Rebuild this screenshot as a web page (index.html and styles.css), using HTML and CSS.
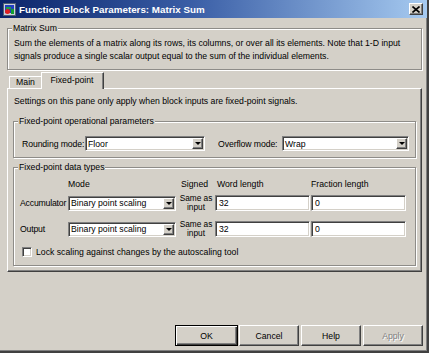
FILE: index.html
```html
<!DOCTYPE html>
<html>
<head>
<meta charset="utf-8">
<link rel="stylesheet" href="styles.css">
</head>
<body>
<div class="window">
  <div class="titlebar">
    <svg class="app-icon" width="13" height="13" viewBox="0 0 13 13">
      <rect x="0.5" y="0.5" width="12" height="12" fill="#c8d0e0" stroke="#506070"/>
      <rect x="2" y="2" width="9" height="8" fill="#2040c0"/>
      <rect x="3" y="4" width="5" height="2" fill="#20a040"/>
      <circle cx="4.5" cy="8.5" r="2.5" fill="#e02020"/>
      <rect x="8" y="6" width="3" height="5" fill="#10a030"/>
    </svg>
    <span class="title">Function Block Parameters: Matrix Sum</span>
    <span class="close-btn">
      <svg width="8" height="7" viewBox="0 0 8 7"><path d="M0.5 0.5 L7.5 6.5 M7.5 0.5 L0.5 6.5" stroke="#000" stroke-width="1.6"/></svg>
    </span>
  </div>
  <div class="client">
    <div class="group desc-group">
      <div class="group-title">Matrix Sum</div>
      <p class="desc">Sum the elements of a matrix along its rows, its columns, or over all its elements. Note that 1-D input<br>signals produce a single scalar output equal to the sum of the individual elements.</p>
    </div>
    <div class="tabs">
      <div class="tab">Main</div>
      <div class="tab active">Fixed-point</div>
    </div>
    <div class="pane">
      <p class="note">Settings on this pane only apply when block inputs are fixed-point signals.</p>
      <div class="group inner-group ops">
        <div class="group-title">Fixed-point operational parameters</div>
        <div class="ops-row">
          <span class="lbl">Rounding mode:</span>
          <div class="combo"><span>Floor</span><span class="drop"><i class="tri"></i></span></div>
          <span class="lbl">Overflow mode:</span>
          <div class="combo"><span>Wrap</span><span class="drop"><i class="tri"></i></span></div>
        </div>
      </div>
      <div class="group inner-group types">
        <div class="group-title">Fixed-point data types</div>
        <div class="types-grid">
          <span></span>
          <span class="hdr hdr-mode">Mode</span>
          <span class="hdr hdr-signed">Signed</span>
          <span class="hdr">Word length</span>
          <span class="hdr">Fraction length</span>

          <span class="row-lbl">Accumulator</span>
          <div class="combo"><span>Binary point scaling</span><span class="drop"><i class="tri"></i></span></div>
          <span class="signed">Same as<br>input</span>
          <div class="field">32</div>
          <div class="field">0</div>

          <span class="row-lbl">Output</span>
          <div class="combo"><span>Binary point scaling</span><span class="drop"><i class="tri"></i></span></div>
          <span class="signed">Same as<br>input</span>
          <div class="field">32</div>
          <div class="field">0</div>
        </div>
        <div class="check-row">
          <span class="checkbox"></span>
          <span>Lock scaling against changes by the autoscaling tool</span>
        </div>
      </div>
    </div>
    <div class="buttons">
      <button class="btn btn-default">OK</button>
      <button class="btn">Cancel</button>
      <button class="btn btn-help">Help</button>
      <button class="btn btn-disabled">Apply</button>
    </div>
  </div>
</div>
</body>
</html>
```

FILE: styles.css
```css
* { box-sizing: border-box; }
html, body { margin: 0; padding: 0; }
body {
  width: 429px;
  height: 353px;
  overflow: hidden;
  background: #d4d0c8;
  font-family: "Liberation Sans", Arial, sans-serif;
  font-size: 8.7px;
  color: #000;
}
.window {
  width: 429px;
  height: 353px;
  border-right: 2px solid #404040;
  border-bottom: 2px solid #404040;
  box-shadow: inset -1px -1px 0 #808080;
  display: flex;
  flex-direction: column;
}
.titlebar {
  height: 18px;
  flex: none;
  display: flex;
  align-items: center;
  padding: 0 3px 0 3px;
  background: linear-gradient(to right, #0a246a 0%, #3a5ea6 45%, #a6caf0 100%);
}
.app-icon { flex: none; margin-right: 3px; }
.title {
  color: #fff;
  font-weight: bold;
  font-size: 9.8px;
  white-space: nowrap;
  flex: 1;
}
.close-btn {
  width: 14px;
  height: 12px;
  background: #d4d0c8;
  border: 1px solid;
  border-color: #fff #404040 #404040 #fff;
  box-shadow: inset -1px -1px 0 #808080;
  display: flex;
  align-items: center;
  justify-content: center;
  margin-right: 1px;
}
.client {
  flex: 1;
  display: flex;
  flex-direction: column;
  padding-left: 7px;
}
.group {
  border: 1px solid #8e8c88;
  box-shadow: inset 1px 1px 0 #fff, 1px 1px 0 #fff;
}
.group-title {
  width: fit-content;
  margin-top: -7px;
  margin-left: 4px;
  padding: 0 1px;
  line-height: 12px;
  background: #d4d0c8;
  white-space: nowrap;
}
.desc-group {
  width: 415px;
  margin-top: 10px;
  padding-bottom: 6px;
}
.desc {
  margin: 3px 0 0 6px;
  line-height: 13px;
  white-space: nowrap;
}
.tabs {
  display: flex;
  align-items: flex-end;
  height: 16px;
  margin-top: 2px;
  padding-left: 2px;
  position: relative;
  z-index: 1;
}
.tab {
  height: 12px;
  line-height: 11px;
  padding: 0 6px 0 5px;
  border: 1px solid;
  border-bottom: none;
  border-color: #fff #404040 transparent #fff;
  box-shadow: inset -1px 0 0 #808080;
  width: 34px;
  text-align: center;
}
.tab.active {
  height: 17px;
  width: 63px;
  line-height: 14px;
  margin-left: -2px;
  margin-bottom: -1px;
  background: #d4d0c8;
}
.pane {
  width: 415px;
  height: 184px;
  border: 1px solid;
  border-color: #fff #404040 #404040 #fff;
  box-shadow: inset -1px -1px 0 #808080;
  padding: 6px 0 0 5px;
}
.note {
  margin: 0 0 0 1px;
  line-height: 12px;
  white-space: nowrap;
}
.inner-group { width: 403px; }
.ops { margin-top: 14px; padding-bottom: 6px; }
.ops-row {
  display: grid;
  grid-template-columns: 63px 120px 13px 64px 127px;
  align-items: center;
  height: 15px;
  margin-top: 9px;
  padding-left: 8px;
}
.ops-row .lbl:nth-of-type(2) { grid-column: 4; }
.lbl { white-space: nowrap; letter-spacing: -0.1px; }
.combo {
  height: 15px;
  background: #fff;
  border: 1px solid;
  border-color: #808080 #fff #fff #808080;
  box-shadow: inset 1px 1px 0 #404040, inset -1px -1px 0 #d4d0c8;
  display: flex;
  align-items: center;
  padding-left: 2px;
  white-space: nowrap;
}
.combo > span:first-child { flex: 1; }
.drop {
  width: 11px;
  height: 11px;
  margin-right: 1px;
  background: #d4d0c8;
  border: 1px solid;
  border-color: #fff #404040 #404040 #fff;
  box-shadow: inset -1px -1px 0 #808080;
  display: flex;
  align-items: center;
  justify-content: center;
}
.tri {
  width: 0;
  height: 0;
  border-left: 3px solid transparent;
  border-right: 3px solid transparent;
  border-top: 3px solid #000;
}
.types { margin-top: 9px; padding-bottom: 7px; }
.types-grid {
  display: grid;
  grid-template-columns: 48px 109px 38px 96px 95px;
  row-gap: 8px;
  align-items: center;
  margin-top: 5px;
  padding-left: 6px;
}
.types-grid .combo { width: 108px; }
.types-grid .field { width: 95px; }
.types-grid .hdr { line-height: 12px; white-space: nowrap; margin-bottom: -4px; }
.types-grid .hdr-signed { padding-left: 4px; }
.types-grid .hdr:nth-child(4) { padding-left: 2px; }
.row-lbl { white-space: nowrap; letter-spacing: -0.2px; }
.signed {
  text-align: center;
  line-height: 9px;
  font-size: 8.3px;
}
.field {
  height: 16px;
  background: #fff;
  border: 1px solid;
  border-color: #808080 #fff #fff #808080;
  box-shadow: inset 1px 1px 0 #404040, inset -1px -1px 0 #d4d0c8;
  padding-left: 3px;
  line-height: 14px;
}
.check-row {
  display: flex;
  align-items: center;
  gap: 4px;
  height: 12px;
  margin-top: 8px;
  padding-left: 8px;
}
.checkbox {
  width: 10px;
  height: 10px;
  background: #fff;
  border: 1px solid;
  border-color: #808080 #fff #fff #808080;
  box-shadow: inset 1px 1px 0 #404040, inset -1px -1px 0 #d4d0c8;
}
.buttons {
  display: flex;
  justify-content: flex-end;
  gap: 2px;
  margin-top: 53px;
  padding-right: 4px;
}
.btn {
  width: 60px;
  height: 21px;
  padding: 0;
  font-family: inherit;
  font-size: 8.7px;
  color: #000;
  background: #d4d0c8;
  border: 1px solid;
  border-color: #fff #404040 #404040 #fff;
  box-shadow: inset -1px -1px 0 #808080;
}
.btn-default {
  width: 63px;
  margin-right: -1px;
  border: 1px solid #000;
  box-shadow: inset 1px 1px 0 #fff, inset -1px -1px 0 #404040, inset -2px -2px 0 #808080;
}
.btn-disabled {
  color: #808080;
  text-shadow: 1px 1px 0 #fff;
}
```
